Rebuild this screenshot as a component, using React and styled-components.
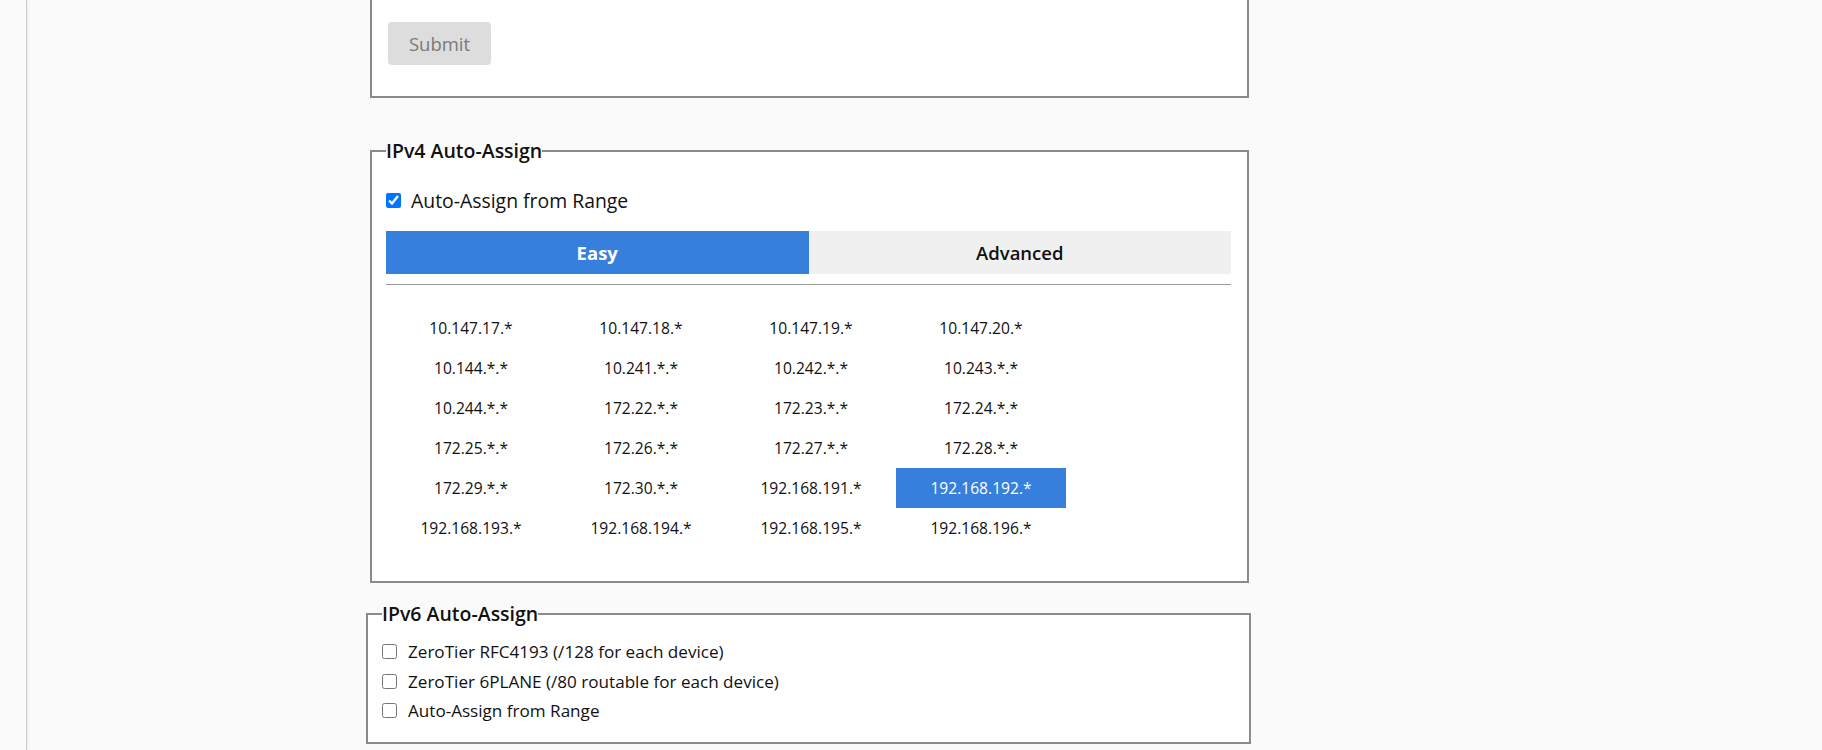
import React, { useState } from 'react'
import styled, { createGlobalStyle } from 'styled-components'

const GlobalStyle = createGlobalStyle`
    html, body {
        margin: 0;
        padding: 0;
        background: #fafafa;
        font-family: "Open Sans", "Noto Sans", sans-serif;
        color: #111;
    }
`

const Page = styled.div`
    display: flex;
    min-height: 750px;
    overflow: hidden;
`

const Sidebar = styled.div`
    width: 26px;
    flex-shrink: 0;
    border-right: 1px solid #c9c9c9;
    box-shadow: 1px 0 4px rgba(0, 0, 0, 0.06);
`

const Main = styled.div`
    padding-left: 343px;
`

const Column = styled.div`
    width: 879px;
    display: flex;
    flex-direction: column;
`

const FormTail = styled.div`
    background: #fff;
    border: 2px solid #8a8a8a;
    border-top: none;
    padding: 22px 16px 31px;
`

const SubmitButton = styled.button`
    width: 103px;
    height: 43px;
    border: none;
    border-radius: 4px;
    background: #dddddd;
    color: #7a7a7a;
    font-family: inherit;
    font-size: 18.5px;
    cursor: default;
`

const Fieldset = styled.fieldset`
    background: #fff;
    border: 2px solid #8a8a8a;
    margin: ${(p) => p.$margin || '0'};
    padding: 0 16px ${(p) => p.$bottom || '33px'} 14px;
    min-width: 0;
`

const Legend = styled.legend`
    padding: 0;
    font-size: 19.5px;
    font-weight: 600;
    line-height: 24px;
    color: #111;
`

const CheckRow = styled.label`
    display: flex;
    align-items: center;
    gap: ${(p) => p.$gap || '10px'};
    height: ${(p) => p.$height || '30px'};
    font-size: ${(p) => p.$size || '19.4px'};
    font-weight: ${(p) => p.$weight || 400};
    color: #111;
`

const Check = styled.input.attrs({ type: 'checkbox' })`
    width: 15px;
    height: 15px;
    margin: 0;
    flex-shrink: 0;
`

const TopCheck = styled.div`
    margin-top: 24px;
`

const Tabs = styled.div`
    display: grid;
    grid-template-columns: 1fr 1fr;
    height: 43px;
    margin-top: 17px;
`

const Tab = styled.div`
    display: flex;
    align-items: center;
    justify-content: center;
    font-size: 18.5px;
    font-weight: ${(p) => (p.$active ? 700 : 600)};
    background: ${(p) => (p.$active ? '#377fdc' : '#f0f0f0')};
    color: ${(p) => (p.$active ? '#fff' : '#111')};
    cursor: pointer;
`

const Divider = styled.hr`
    border: none;
    border-top: 1px solid #9a9a9a;
    margin: 10px 0 23px;
`

const RangeGrid = styled.div`
    display: grid;
    grid-template-columns: repeat(4, 170px);
    grid-auto-rows: 40px;
`

const RangeCell = styled.div`
    display: flex;
    align-items: center;
    justify-content: center;
    font-size: 15.6px;
    background: ${(p) => (p.$selected ? '#377fdc' : 'transparent')};
    color: ${(p) => (p.$selected ? '#fff' : '#111')};
    cursor: pointer;
`

const V6List = styled.div`
    margin-top: 11px;
    display: flex;
    flex-direction: column;
`

const ranges = [
    '10.147.17.*', '10.147.18.*', '10.147.19.*', '10.147.20.*',
    '10.144.*.*', '10.241.*.*', '10.242.*.*', '10.243.*.*',
    '10.244.*.*', '172.22.*.*', '172.23.*.*', '172.24.*.*',
    '172.25.*.*', '172.26.*.*', '172.27.*.*', '172.28.*.*',
    '172.29.*.*', '172.30.*.*', '192.168.191.*', '192.168.192.*',
    '192.168.193.*', '192.168.194.*', '192.168.195.*', '192.168.196.*',
]

const v6Options = [
    'ZeroTier RFC4193 (/128 for each device)',
    'ZeroTier 6PLANE (/80 routable for each device)',
    'Auto-Assign from Range',
]

const App = () => {
    const [tab, setTab] = useState('easy')
    const [selected, setSelected] = useState('192.168.192.*')

    return (
        <>
            <GlobalStyle />
            <Page>
                <Sidebar />
                <Main>
                    <Column>
                        <FormTail>
                            <SubmitButton disabled>Submit</SubmitButton>
                        </FormTail>

                        <Fieldset $margin="41px 0 0">
                            <Legend>IPv4 Auto-Assign</Legend>
                            <TopCheck>
                                <CheckRow $height="27px">
                                    <Check defaultChecked />
                                    Auto-Assign from Range
                                </CheckRow>
                            </TopCheck>
                            <Tabs>
                                <Tab
                                    $active={tab === 'easy'}
                                    onClick={() => setTab('easy')}
                                >
                                    Easy
                                </Tab>
                                <Tab
                                    $active={tab === 'advanced'}
                                    onClick={() => setTab('advanced')}
                                >
                                    Advanced
                                </Tab>
                            </Tabs>
                            <Divider />
                            <RangeGrid>
                                {ranges.map((r) => (
                                    <RangeCell
                                        key={r}
                                        $selected={r === selected}
                                        onClick={() => setSelected(r)}
                                    >
                                        {r}
                                    </RangeCell>
                                ))}
                            </RangeGrid>
                        </Fieldset>

                        <Fieldset $margin="19px -2px 0 -4px" $bottom="16px">
                            <Legend>IPv6 Auto-Assign</Legend>
                            <V6List>
                                {v6Options.map((o) => (
                                    <CheckRow
                                        key={o}
                                        $size="17.1px"
                                        $weight={500}
                                        $gap="11px"
                                        $height="29.5px"
                                    >
                                        <Check />
                                        {o}
                                    </CheckRow>
                                ))}
                            </V6List>
                        </Fieldset>
                    </Column>
                </Main>
            </Page>
        </>
    )
}

export default App
